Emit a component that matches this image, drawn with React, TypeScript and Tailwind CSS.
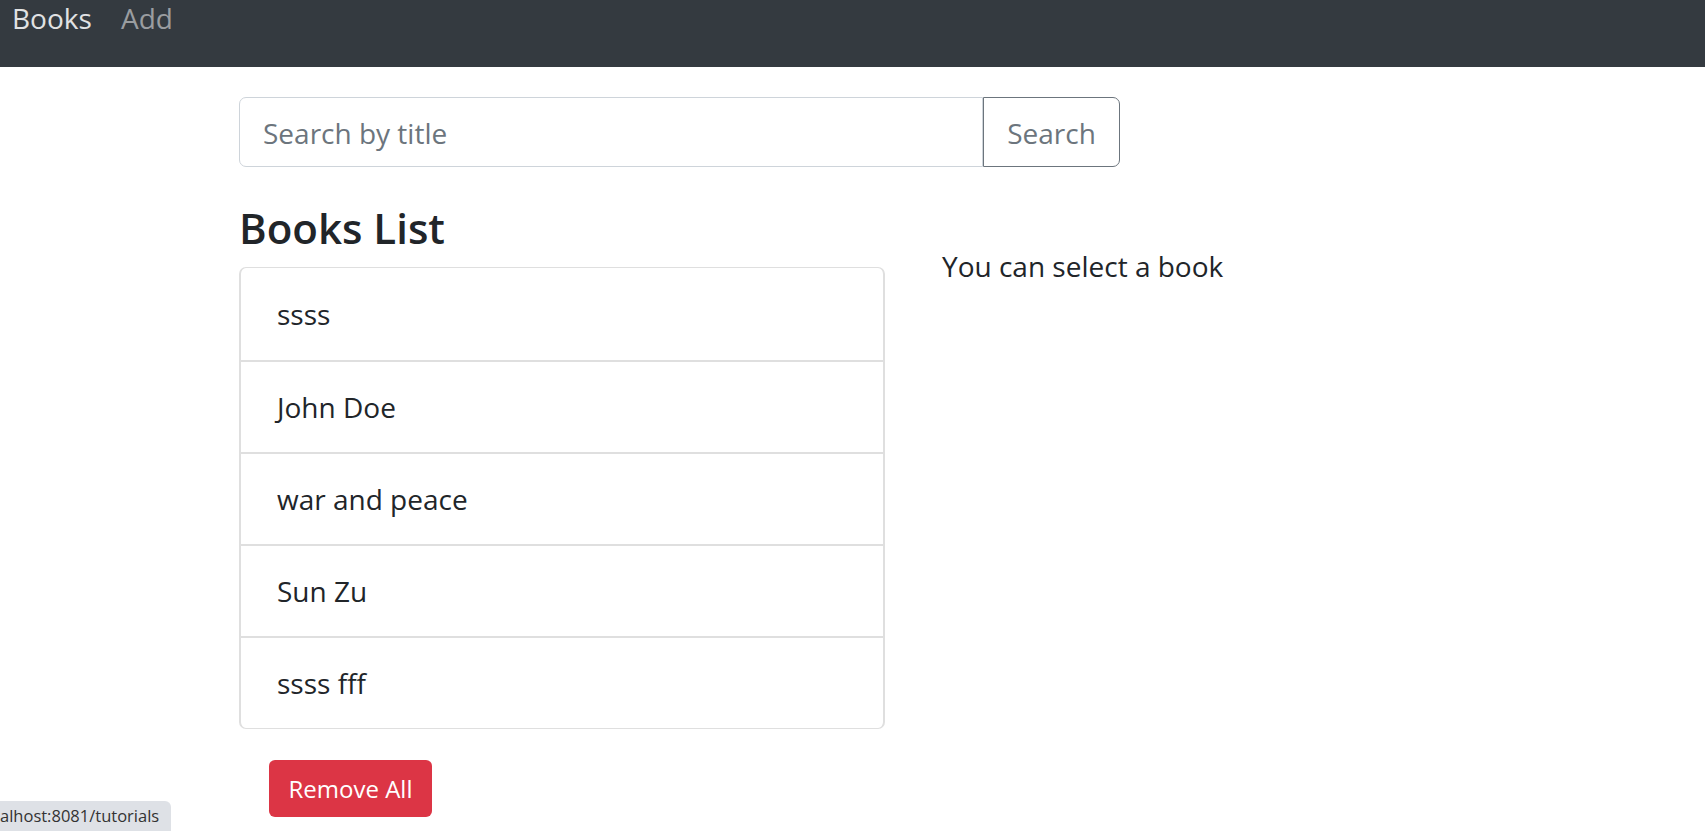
import React from "react";

const books = ["ssss", "John Doe", "war and peace", "Sun Zu", "ssss fff"];

export default function App() {
  return (
    <div className="min-h-screen bg-white font-['Open_Sans',sans-serif] text-[#212529]">
      <nav className="h-[67px] bg-[#343a40] flex items-start pl-[12px] text-[28px] leading-[36px]">
        <span className="w-[109px] text-[#e1e2e3]">Books</span>
        <span className="text-[#9a9da0]">Add</span>
      </nav>

      <div className="pl-[239px] pt-[30px]">
        <div className="flex w-[881px] h-[70px]">
          <div className="flex-1 border border-[#ced4da] rounded-l-[7px] flex items-center pl-[23px] pt-[2px] text-[28px] text-[#6c757d]">
            Search by title
          </div>
          <button className="w-[137px] border border-[#6c757d] rounded-r-[7px] text-[28px] text-[#6c757d] bg-white pt-[2px]">
            Search
          </button>
        </div>

        <div className="flex">
          <div className="w-[646px]">
            <h4 className="mt-[36px] mb-[14px] h-[50px] leading-[50px] text-[42px] font-semibold">
              Books List
            </h4>
            <ul className="border-y border-x-2 border-[#dfdfdf] rounded-[7px]">
              {books.map((b, i) => (
                <li
                  key={b}
                  className={
                    i === 0
                      ? "h-[92px] flex items-center pl-[36px] text-[28px]"
                      : "h-[92px] flex items-center pl-[36px] text-[28px] border-t-2 border-[#dfdfdf]"
                  }
                >
                  {b}
                </li>
              ))}
            </ul>
            <button className="ml-[30px] mt-[31px] w-[163px] h-[57px] rounded-[6px] bg-[#dc3545] text-white text-[24px]">
              Remove All
            </button>
          </div>
          <div className="ml-[57px] mt-[78px]">
            <p className="text-[28px] leading-[42px]">You can select a book</p>
          </div>
        </div>
      </div>

      <div className="fixed bottom-0 left-0 h-[30px] w-[171px] bg-[#dee1e6] rounded-tr-[6px] flex items-center text-[16.5px] text-[#333] whitespace-nowrap">
        alhost:8081/tutorials
      </div>
    </div>
  );
}
